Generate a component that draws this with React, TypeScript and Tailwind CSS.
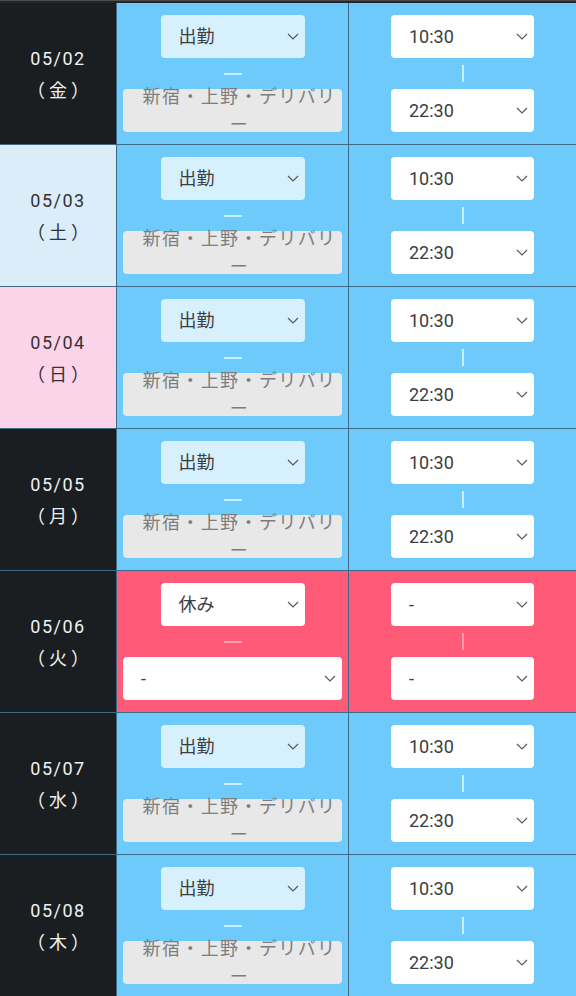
import React from "react";

type Day = {
  date: string;
  week: string;
  tone: "dark" | "sat" | "sun";
  off?: boolean;
};

const DAYS: Day[] = [
  { date: "05/02", week: "（金）", tone: "dark" },
  { date: "05/03", week: "（土）", tone: "sat" },
  { date: "05/04", week: "（日）", tone: "sun" },
  { date: "05/05", week: "（月）", tone: "dark" },
  { date: "05/06", week: "（火）", tone: "dark", off: true },
  { date: "05/07", week: "（水）", tone: "dark" },
  { date: "05/08", week: "（木）", tone: "dark" },
];

const FONT = { fontFamily: 'Roboto, "Noto Sans CJK JP", sans-serif' };

function Chevron() {
  return (
    <svg width="12" height="7" viewBox="0 0 12 7" className="shrink-0" aria-hidden>
      <polyline points="1,1 6,6 11,1" fill="none" stroke="#555" strokeWidth="1.1" />
    </svg>
  );
}

/** Fake select box: label on the left, chevron on the right. */
function Select({ label, className }: { label: string; className: string }) {
  return (
    <div
      className={`flex h-[43px] items-center justify-between rounded-[4px] pl-[18px] pr-[6px] text-[18px] text-[#3d3d3d] ${className}`}
    >
      <span>{label}</span>
      <Chevron />
    </div>
  );
}

function DateCell({ day }: { day: Day }) {
  const bg =
    day.tone === "sat"
      ? "bg-[#dcedfa] text-[#333]"
      : day.tone === "sun"
        ? "bg-[#fbd4ea] text-[#333]"
        : "bg-[#1b1e20] text-[#f0f0f0]";
  return (
    <div
      className={`flex w-[117px] shrink-0 flex-col items-center justify-center border-r border-[#3e6a86] pt-[2px] text-[18px] leading-[32px] tracking-[1.5px] ${bg}`}
    >
      <span>{day.date}</span>
      <span className="-mr-[4px] tracking-[4px]">{day.week}</span>
    </div>
  );
}

function ShiftCell({ off }: { off?: boolean }) {
  const bg = off ? "bg-[#ff5b78]" : "bg-[#6dcafb]";
  return (
    <div className={`flex w-[232px] shrink-0 flex-col border-r border-[#3e6a86] px-[6px] py-[12px] ${bg}`}>
      <Select label={off ? "休み" : "出勤"} className={`mx-auto w-[144px] ${off ? "bg-white" : "bg-[#d6f0fd]"}`} />
      <div className="flex h-[31px] items-center justify-center">
        <div className={`h-[2px] w-[18px] ${off ? "bg-[#ff9fb0]" : "bg-[#c6efff]"}`} />
      </div>
      {off ? (
        <Select label="-" className="w-full bg-white" />
      ) : (
        <div className="flex h-[43px] items-center justify-center rounded-[4px] bg-[#e8e8e8] pl-[18px] pr-[4px]">
          <div className="w-full whitespace-nowrap text-center text-[18px] leading-[28px] tracking-[1.4px] text-[#7d7d7d]">
            新宿・上野・デリバリ
            <br />ー
          </div>
        </div>
      )}
    </div>
  );
}

function TimeCell({ off }: { off?: boolean }) {
  const bg = off ? "bg-[#ff5b78]" : "bg-[#6dcafb]";
  return (
    <div className={`flex flex-1 flex-col items-center py-[12px] ${bg}`}>
      <Select label={off ? "-" : "10:30"} className="w-[143px] bg-white" />
      <div className="flex h-[31px] items-center justify-center">
        <div className={`h-[17px] w-[2px] ${off ? "bg-[#ff9fb0]" : "bg-[#c6efff]"}`} />
      </div>
      <Select label={off ? "-" : "22:30"} className="w-[143px] bg-white" />
    </div>
  );
}

export default function App() {
  return (
    <div className="h-[996px] w-[576px] overflow-hidden bg-[#6dcafb]" style={FONT}>
      <div className="h-[3px] border-t border-[#4a4e52] bg-[#23272a]" />
      {DAYS.map((day) => (
        <div key={day.date} className="flex h-[142px] border-b border-[#3e6a86]">
          <DateCell day={day} />
          <ShiftCell off={day.off} />
          <TimeCell off={day.off} />
        </div>
      ))}
    </div>
  );
}
